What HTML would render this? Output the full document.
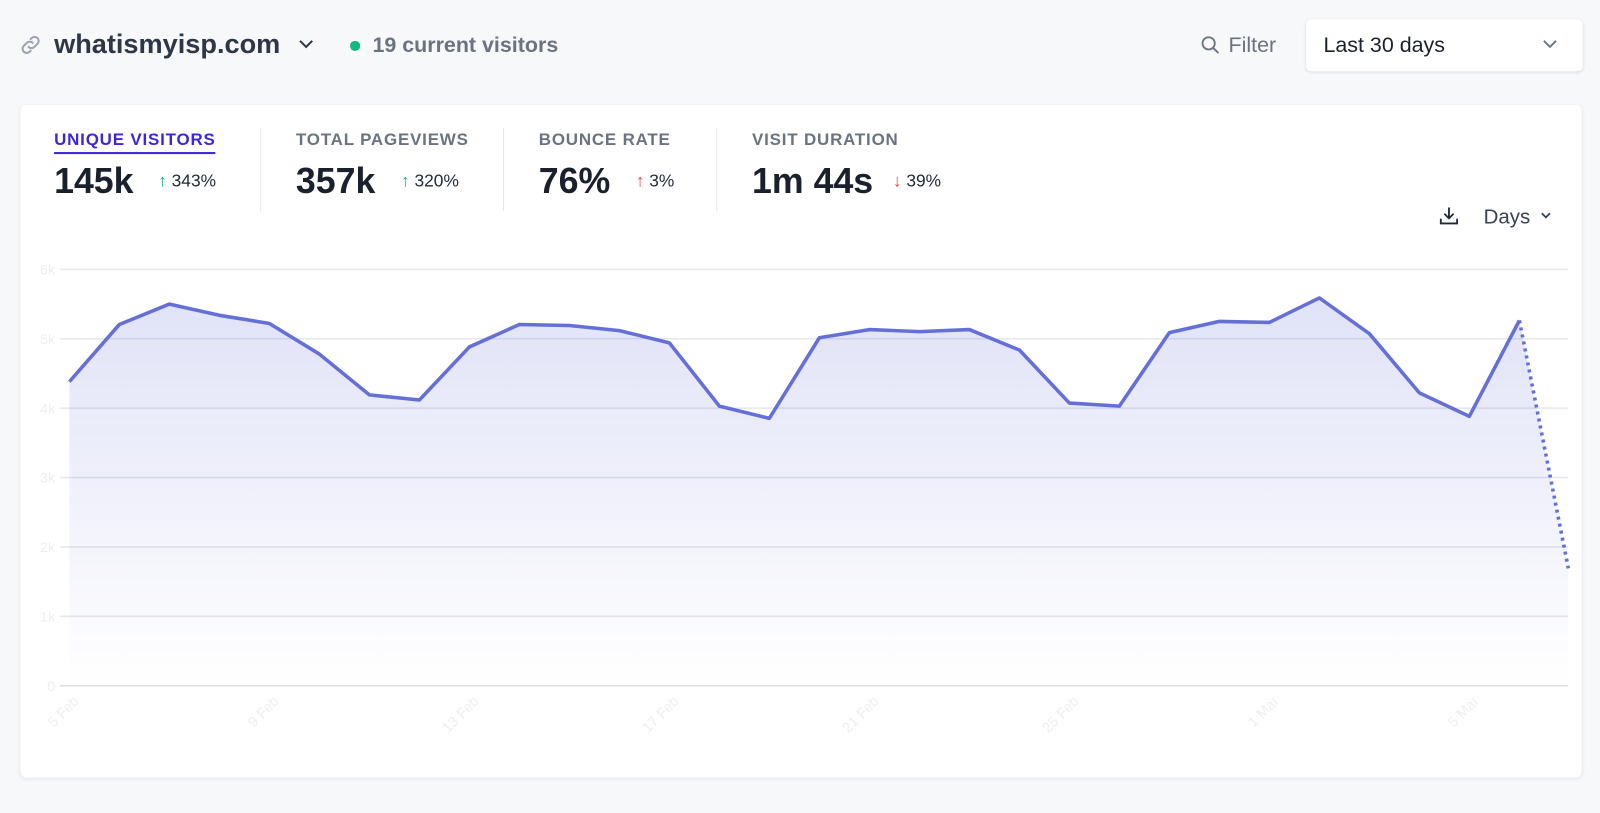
<!DOCTYPE html>
<html><head><meta charset="utf-8"><style>
body{margin:0;width:1600px;height:797px;background:#f7f8fa;font-family:"Liberation Sans",sans-serif;position:relative;overflow:hidden}
#w{position:absolute;left:0;top:0;width:1568px;height:781px;transform:scale(1.0204);transform-origin:0 0}
.a{position:absolute}
.card{left:20px;top:103px;width:1530px;height:659px;background:#fff;border-radius:6px;box-shadow:0 1px 4px rgba(0,0,0,.08)}
.lab{font-size:16.6px;font-weight:bold;letter-spacing:.8px;color:#6b7280}
.val{font-size:35px;font-weight:bold;color:#1a202c}
.chg{font-size:17px;color:#1f2937}
.chg b{font-size:17px}
.sep{width:1px;height:82px;background:#e2e4e8;top:125px}
</style></head><body><div id="w">
<svg class="a" style="left:18px;top:32px" width="24" height="24" viewBox="0 0 24 24" fill="none" stroke="#9ca3af" stroke-width="2" stroke-linecap="round"><path d="M10 14a4 4 0 0 0 5.7 0l3-3a4 4 0 0 0-5.7-5.7l-1 1"/><path d="M14 10a4 4 0 0 0-5.7 0l-3 3a4 4 0 0 0 5.7 5.7l1-1"/></svg>
<div class="a" style="left:53px;top:28px;font-size:26.6px;font-weight:bold;color:#2d3748">whatismyisp.com</div>
<svg class="a" style="left:291px;top:36px" width="18" height="14" viewBox="0 0 18 14" fill="none" stroke="#2d3748" stroke-width="2"><path d="M3 4l6 6 6-6"/></svg>
<div class="a" style="left:343px;top:40px;width:10px;height:10px;border-radius:50%;background:#10b981"></div>
<div class="a" style="left:365px;top:33px;font-size:21px;font-weight:bold;color:#6b7280">19 current visitors</div>
<svg class="a" style="left:1176px;top:34px" width="20" height="20" viewBox="0 0 20 20" fill="none" stroke="#6b7280" stroke-width="1.8"><circle cx="8.5" cy="8.5" r="6"/><path d="M13 13l5 5"/></svg>
<div class="a" style="left:1204px;top:33px;font-size:21px;color:#6b7280">Filter</div>
<div class="a" style="left:1280px;top:19px;width:271px;height:51px;background:#fff;border-radius:5px;box-shadow:0 1px 3px rgba(0,0,0,.12)"></div>
<div class="a" style="left:1297px;top:33px;font-size:21px;color:#1a202c">Last 30 days</div>
<svg class="a" style="left:1510px;top:36px" width="18" height="14" viewBox="0 0 18 14" fill="none" stroke="#6b7280" stroke-width="1.8"><path d="M3 4l6 6 6-6"/></svg>
<div class="a card"></div>
<div class="a lab" style="left:53px;top:127px;color:#3b27d9;border-bottom:2px solid #3b27d9;padding-bottom:2px">UNIQUE VISITORS</div>
<div class="a val" style="left:53px;top:158px">145k</div>
<div class="a chg" style="left:155px;top:168px"><b style="color:#10b981">↑</b> 343%</div>
<div class="a sep" style="left:255px"></div>
<div class="a lab" style="left:290px;top:127px">TOTAL PAGEVIEWS</div>
<div class="a val" style="left:290px;top:158px">357k</div>
<div class="a chg" style="left:393px;top:168px"><b style="color:#10b981">↑</b> 320%</div>
<div class="a sep" style="left:493px"></div>
<div class="a lab" style="left:528px;top:127px">BOUNCE RATE</div>
<div class="a val" style="left:528px;top:158px">76%</div>
<div class="a chg" style="left:623px;top:168px"><b style="color:#ef4444">↑</b> 3%</div>
<div class="a sep" style="left:702px"></div>
<div class="a lab" style="left:737px;top:127px">VISIT DURATION</div>
<div class="a val" style="left:737px;top:158px">1m 44s</div>
<div class="a chg" style="left:875px;top:168px"><b style="color:#ef4444">↓</b> 39%</div>
<svg class="a" style="left:1409px;top:201px" width="22" height="22" viewBox="0 0 22 22" fill="none" stroke="#1f2937" stroke-width="1.8" stroke-linecap="round"><path d="M11 3v10M7 9l4 4 4-4M3 14v4h16v-4"/></svg>
<div class="a" style="left:1454px;top:202px;font-size:20px;color:#374151">Days</div>
<svg class="a" style="left:1508px;top:206px" width="14" height="12" viewBox="0 0 14 12" fill="none" stroke="#374151" stroke-width="1.8"><path d="M3 3l4 4 4-4"/></svg>
<svg class="a" style="left:0;top:0" width="1600" height="797">
<defs><linearGradient id="g" x1="0" y1="0" x2="0" y2="1"><stop offset="0" stop-color="#6570d6" stop-opacity=".2"/><stop offset="1" stop-color="#6570d6" stop-opacity="0"/></linearGradient></defs>
<g stroke="#e5e7eb" stroke-width="1.5">
<line x1="59" x2="1537" y1="264" y2="264"/><line x1="59" x2="1537" y1="332" y2="332"/><line x1="59" x2="1537" y1="400" y2="400"/><line x1="59" x2="1537" y1="468" y2="468"/><line x1="59" x2="1537" y1="536" y2="536"/><line x1="59" x2="1537" y1="604" y2="604"/><line x1="59" x2="1537" y1="672" y2="672" stroke="#dcdde2"/>
</g>
<g fill="#eceef1" font-size="14" text-anchor="end">
<text x="54" y="269">6k</text><text x="54" y="337">5k</text><text x="54" y="405">4k</text><text x="54" y="473">3k</text><text x="54" y="541">2k</text><text x="54" y="609">1k</text><text x="54" y="677">0</text>
</g>
<g fill="#eceef1" font-size="14" text-anchor="end">
<text transform="translate(78,688) rotate(-45)">5 Feb</text><text transform="translate(274,688) rotate(-45)">9 Feb</text><text transform="translate(470,688) rotate(-45)">13 Feb</text><text transform="translate(666,688) rotate(-45)">17 Feb</text><text transform="translate(862,688) rotate(-45)">21 Feb</text><text transform="translate(1058,688) rotate(-45)">25 Feb</text><text transform="translate(1254,688) rotate(-45)">1 Mar</text><text transform="translate(1450,688) rotate(-45)">5 Mar</text>
</g>
<path fill="url(#g)" d="M68,374 L117,318 L166,298 L215,309 L264,317 L313,347 L362,387 L411,392 L460,340 L509,318 L558,319 L607,324 L656,336 L705,398 L754,410 L803,331 L852,323 L901,325 L950,323 L999,343 L1048,395 L1097,398 L1146,326 L1195,315 L1244,316 L1293,292 L1342,327 L1391,385 L1440,408 L1489,314 L1537,557 L1537,672 L68,672Z"/>
<polyline fill="none" stroke="#6570d6" stroke-width="3.5" stroke-linejoin="round" points="68,374 117,318 166,298 215,309 264,317 313,347 362,387 411,392 460,340 509,318 558,319 607,324 656,336 705,398 754,410 803,331 852,323 901,325 950,323 999,343 1048,395 1097,398 1146,326 1195,315 1244,316 1293,292 1342,327 1391,385 1440,408 1489,314"/>
<line x1="1489" y1="314" x2="1537" y2="557" stroke="#6570d6" stroke-width="3.5" stroke-dasharray="3 4"/>
</svg>
</div></body></html>
